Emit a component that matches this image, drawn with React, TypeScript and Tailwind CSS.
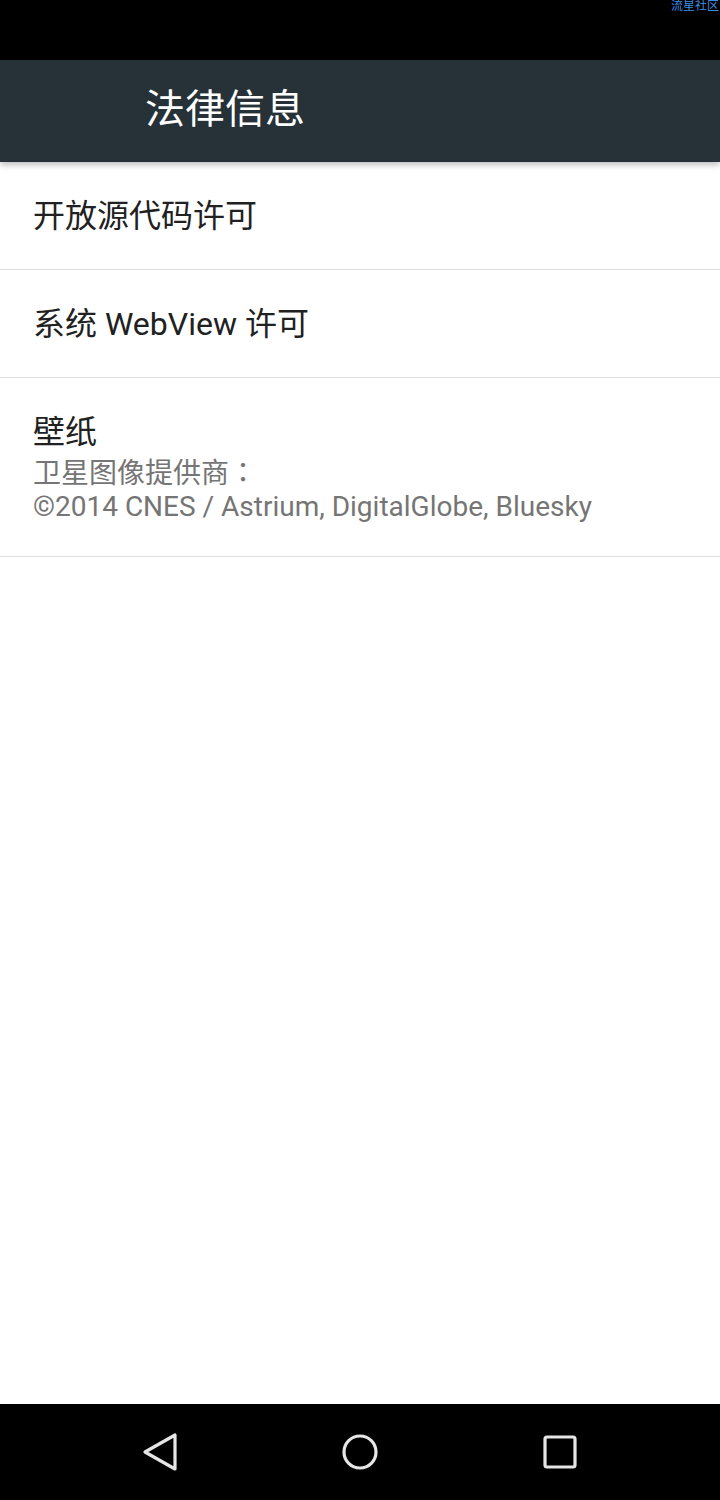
import React from "react";

const font = { fontFamily: 'Roboto, "Noto Sans CJK SC", sans-serif' };

function Row({ title, children, className }: { title: string; children?: React.ReactNode; className: string }) {
  return (
    <div className={`flex flex-col justify-center border-b border-[#e0e0e0] px-[33px] ${className}`}>
      <div className="text-[32px] leading-[40px] text-[#212121]">{title}</div>
      {children}
    </div>
  );
}

export default function App() {
  return (
    <div className="w-[720px] h-[1500px] flex flex-col bg-white" style={font}>
      <div className="h-[60px] bg-black flex justify-end items-start">
        <span className="text-[12px] leading-[13px] text-[#3d8ee0] pr-[1px]">流星社区</span>
      </div>
      <div className="h-[102px] bg-[#263238] flex items-center pl-[145px] pb-[3px] shadow-[0_3px_6px_rgba(0,0,0,0.25)] relative z-10">
        <span className="text-[40px] leading-[48px] text-white">法律信息</span>
      </div>
      <Row title="开放源代码许可" className="h-[108px]" />
      <Row title="系统 WebView 许可" className="h-[108px]" />
      <Row title="壁纸" className="h-[179px] pt-[1px]">
        <div className="text-[28px] leading-[33px] text-[#757575] mt-[3px] [text-spacing-trim:space-all]">
          卫星图像提供商<span style={{ fontFamily: '"Noto Sans CJK TC", sans-serif' }}>：</span>
        </div>
        <div className="text-[28px] leading-[33px] text-[#757575]">©2014 CNES / Astrium, DigitalGlobe, Bluesky</div>
      </Row>
      <div className="flex-1" />
      <div className="h-[96px] bg-black flex items-center gap-[160px] pl-[140px]">
        <svg width="40" height="40" viewBox="0 0 40 40">
          <path d="M35 3 L35 37 L5 20 Z" fill="none" stroke="#e6e6e6" strokeWidth="3.2" strokeLinejoin="round" />
        </svg>
        <svg width="40" height="40" viewBox="0 0 40 40">
          <circle cx="20" cy="20" r="16" fill="none" stroke="#e6e6e6" strokeWidth="3.2" />
        </svg>
        <svg width="40" height="40" viewBox="0 0 40 40">
          <rect x="5" y="5" width="30" height="30" rx="2" fill="none" stroke="#e6e6e6" strokeWidth="3.2" />
        </svg>
      </div>
    </div>
  );
}
